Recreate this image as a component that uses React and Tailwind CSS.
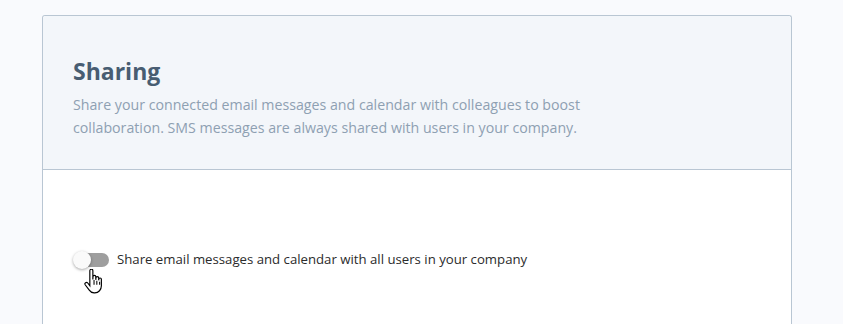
export default function App() {
  return (
    <div className="h-[324px] overflow-hidden bg-[#f9fafd] pt-[15px] pl-[42px] font-['Open_Sans','Noto_Sans',sans-serif]">
      <div className="w-[750px] rounded-t-[3px] border border-b-0 border-[#b9c6d3] bg-white">
        <div className="h-[154px] border-b border-[#b9c6d3] bg-[#f3f6fa] px-[30px] pt-[40px] rounded-t-[3px]">
          <h2 className="text-[23px] font-bold leading-[30px] text-[#485d72]">Sharing</h2>
          <p className="mt-[7px] w-[530px] text-[14.2px] leading-[23px] text-[#8ea0b2]">
            Share your connected email messages and calendar with colleagues to boost collaboration. SMS messages are always shared with users in your company.
          </p>
        </div>
        <div className="h-[170px] px-[30px] pt-[80px]">
          <label className="relative flex items-center gap-[8px]">
            <span className="relative flex h-[18px] w-[36px] items-center">
              <span className="ml-[6px] h-[14px] w-[30px] rounded-full bg-[#9e9e9e]" />
              <span className="absolute left-0 top-0 h-[18px] w-[18px] rounded-full bg-[#fafafa] shadow-[0_1px_3px_rgba(0,0,0,0.35)]" />
            </span>
            <span className="text-[13.2px] text-[#2b2b2b]">Share email messages and calendar with all users in your company</span>
            <svg className="absolute left-[11px] top-[19px]" width="21" height="28" viewBox="0 0 18 24">
              <path
                d="M5 1.5c0-.8.6-1.4 1.3-1.4s1.3.6 1.3 1.4V9l.1-2.3c0-.7.6-1.2 1.2-1.2s1.2.5 1.2 1.2v2.6l.1-1.6c0-.7.6-1.2 1.2-1.2s1.2.5 1.2 1.2v2l.1-.9c0-.6.5-1.1 1.1-1.1s1.1.5 1.1 1.1v5.6c0 3.3-2.4 6-5.6 6H8.6c-1.8 0-3.2-.9-4.1-2.3L1 13.5c-.4-.6-.2-1.4.4-1.8.6-.4 1.4-.2 1.8.3L5 14.3V1.5z"
                fill="#fff"
                stroke="#000"
                strokeWidth="1"
              />
              <path d="M8.6 9.5v4M11 10v3.5M13.4 11v2.5" stroke="#000" strokeWidth="0.9" />
            </svg>
          </label>
        </div>
      </div>
    </div>
  )
}
